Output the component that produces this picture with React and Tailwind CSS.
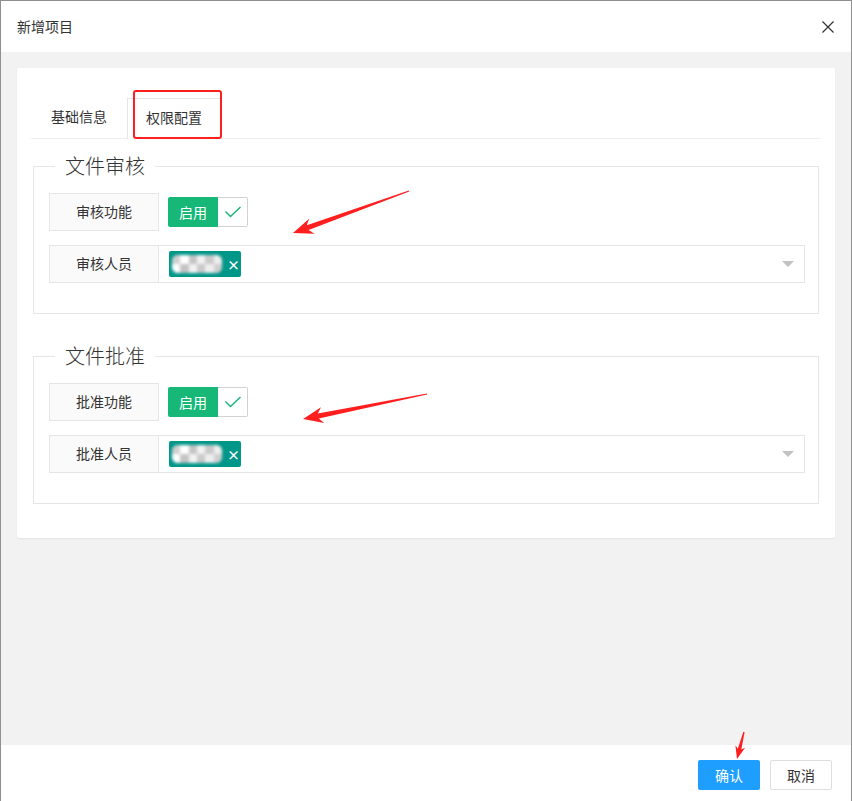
import React from "react";

const font = { fontFamily: '"Noto Sans CJK SC", "Noto Sans", sans-serif' };

// builds a tapered arrow polygon from tail to tip
function arrowPoints(tail, tip, headLen, headHalf, neckHalf) {
  const dx = tip[0] - tail[0];
  const dy = tip[1] - tail[1];
  const len = Math.hypot(dx, dy);
  const ux = dx / len;
  const uy = dy / len;
  const nx = -uy;
  const ny = ux;
  const p = (along, side) => [
    tip[0] - ux * along + nx * side,
    tip[1] - uy * along + ny * side,
  ];
  const pts = [
    tip,
    p(headLen, headHalf),
    p(headLen * 0.78, neckHalf),
    [tail[0] + nx * 0.6, tail[1] + ny * 0.6],
    [tail[0] - nx * 0.6, tail[1] - ny * 0.6],
    p(headLen * 0.78, -neckHalf),
    p(headLen, -headHalf),
  ];
  return pts.map((q) => q[0].toFixed(1) + "," + q[1].toFixed(1)).join(" ");
}

function Mosaic() {
  const cells = ["#cfcfcf", "#ffffff", "#c4c4c4", "#f2f2f2", "#cacaca", "#eeeeee"];
  return (
    <div className="flex h-[18px] w-[50px] overflow-hidden rounded-[6px] bg-[#e0e0e0] blur-[1.5px]">
      {cells.map((c, i) => (
        <div key={i} className="flex-1 flex flex-col">
          <div className="flex-1" style={{ backgroundColor: c }} />
          <div className="flex-1" style={{ backgroundColor: cells[(i + 1) % cells.length] }} />
        </div>
      ))}
    </div>
  );
}

function Section({ title, prefix }) {
  return (
    <fieldset className="mx-[2px] border border-[#e6e6e6] pl-[15px] pr-[13px] pb-[30px]">
      <legend className="ml-[6px] px-[10px] text-[20px] leading-[28px] font-light text-[#333]">
        {title}
      </legend>

      <div className="pt-[13px]">
        <div className="flex items-center h-[38px] mb-[14px]">
          <div className="w-[110px] h-[38px] flex items-center justify-center border border-[#e6e6e6] bg-[#fafafa] text-[14px] text-[#333] pb-[2px]">
            {prefix}功能
          </div>

          <div className="ml-[9px] flex h-[30px]">
            <div className="w-[50px] flex items-center justify-center bg-[#16b777] text-white text-[14px] rounded-l-[2px]">
              启用
            </div>
            <div className="w-[30px] flex items-center justify-center border border-l-0 border-[#d2d2d2] rounded-r-[2px]">
              <svg width="18" height="12" viewBox="0 0 18 12">
                <path d="M1.5 5.5 L6.5 10.5 L16.5 1" fill="none" stroke="#16b777" strokeWidth="1.4" />
              </svg>
            </div>
          </div>
        </div>

        <div className="flex h-[38px]">
          <div className="w-[110px] h-[38px] flex items-center justify-center border border-[#e6e6e6] bg-[#fafafa] text-[14px] text-[#333] pb-[2px]">
            {prefix}人员
          </div>

          <div className="flex-1 -ml-px h-[38px] flex items-center justify-between border border-[#e6e6e6] bg-white pl-[10px] pr-[10px]">
            <div className="flex items-center h-[26px] w-[72px] bg-[#009688] rounded-[2px] pl-[3px]">
              <Mosaic />
              <span className="ml-[5px] text-white text-[13px] font-bold leading-none">×</span>
            </div>
            <div className="w-0 h-0 border-x-[6px] border-x-transparent border-t-[6px] border-t-[#c2c2c2]" />
          </div>
        </div>
      </div>
    </fieldset>
  );
}

export default function App() {
  return (
    <div
      className="relative w-[852px] h-[801px] flex flex-col border-t border-x border-[#8f8f8f] bg-white overflow-hidden"
      style={font}
    >
      {/* Header */}
      <div className="h-[51px] flex items-center justify-between pl-[16px] pr-[17px]">
        <span className="text-[14px] text-[#333]">新增项目</span>
        <svg width="12" height="12" viewBox="0 0 12 12">
          <path d="M0.5 0.5 L11.5 11.5 M11.5 0.5 L0.5 11.5" stroke="#333" strokeWidth="1.2" />
        </svg>
      </div>

      {/* Body */}
      <div className="flex-1 bg-[#f2f2f2] px-[16px] pt-[16px]">
        <div className="bg-white rounded-[2px] shadow-[0_1px_2px_rgba(0,0,0,0.06)] h-[470px] px-[14px] pt-[30px]">
          {/* Tabs */}
          <div className="flex h-[41px] border-b border-[#eeeeee]">
            <div className="px-[20px] h-[40px] pb-[3px] flex items-center text-[14px] text-[#333]">基础信息</div>
            <div className="px-[18px] h-[41px] pb-[3px] -mb-px flex items-center text-[14px] text-[#333] bg-white border border-b-0 border-[#e6e6e6]">
              权限配置
            </div>
          </div>

          <div className="pt-[13px]">
            <Section title="文件审核" prefix="审核" />
            <div className="h-[28px]" />
            <Section title="文件批准" prefix="批准" />
          </div>
        </div>
      </div>

      {/* Footer */}
      <div className="h-[56px] flex justify-end items-start pt-[15px] pr-[19px] gap-[10px]">
        <button className="w-[62px] h-[30px] bg-[#1e9fff] text-white text-[14px] rounded-[2px]">确认</button>
        <button className="w-[62px] h-[30px] bg-white border border-[#dedede] text-[#333] text-[14px] rounded-[2px]">
          取消
        </button>
      </div>

      {/* Annotations */}
      <div className="absolute left-[132px] top-[89px] w-[89px] h-[49px] border-2 border-[#ff1f1f] rounded-[3px] pointer-events-none" />
      <svg className="absolute left-0 top-0 pointer-events-none" width="852" height="801">
        <polygon points={arrowPoints([408, 190], [292, 232], 20, 8, 2.6)} fill="#ff1f1f" />
        <polygon points={arrowPoints([426, 393], [302, 418], 20, 8, 2.6)} fill="#ff1f1f" />
        <polygon points={arrowPoints([743, 731], [736, 758], 13, 5, 1.8)} fill="#ff1f1f" />
      </svg>
    </div>
  );
}
